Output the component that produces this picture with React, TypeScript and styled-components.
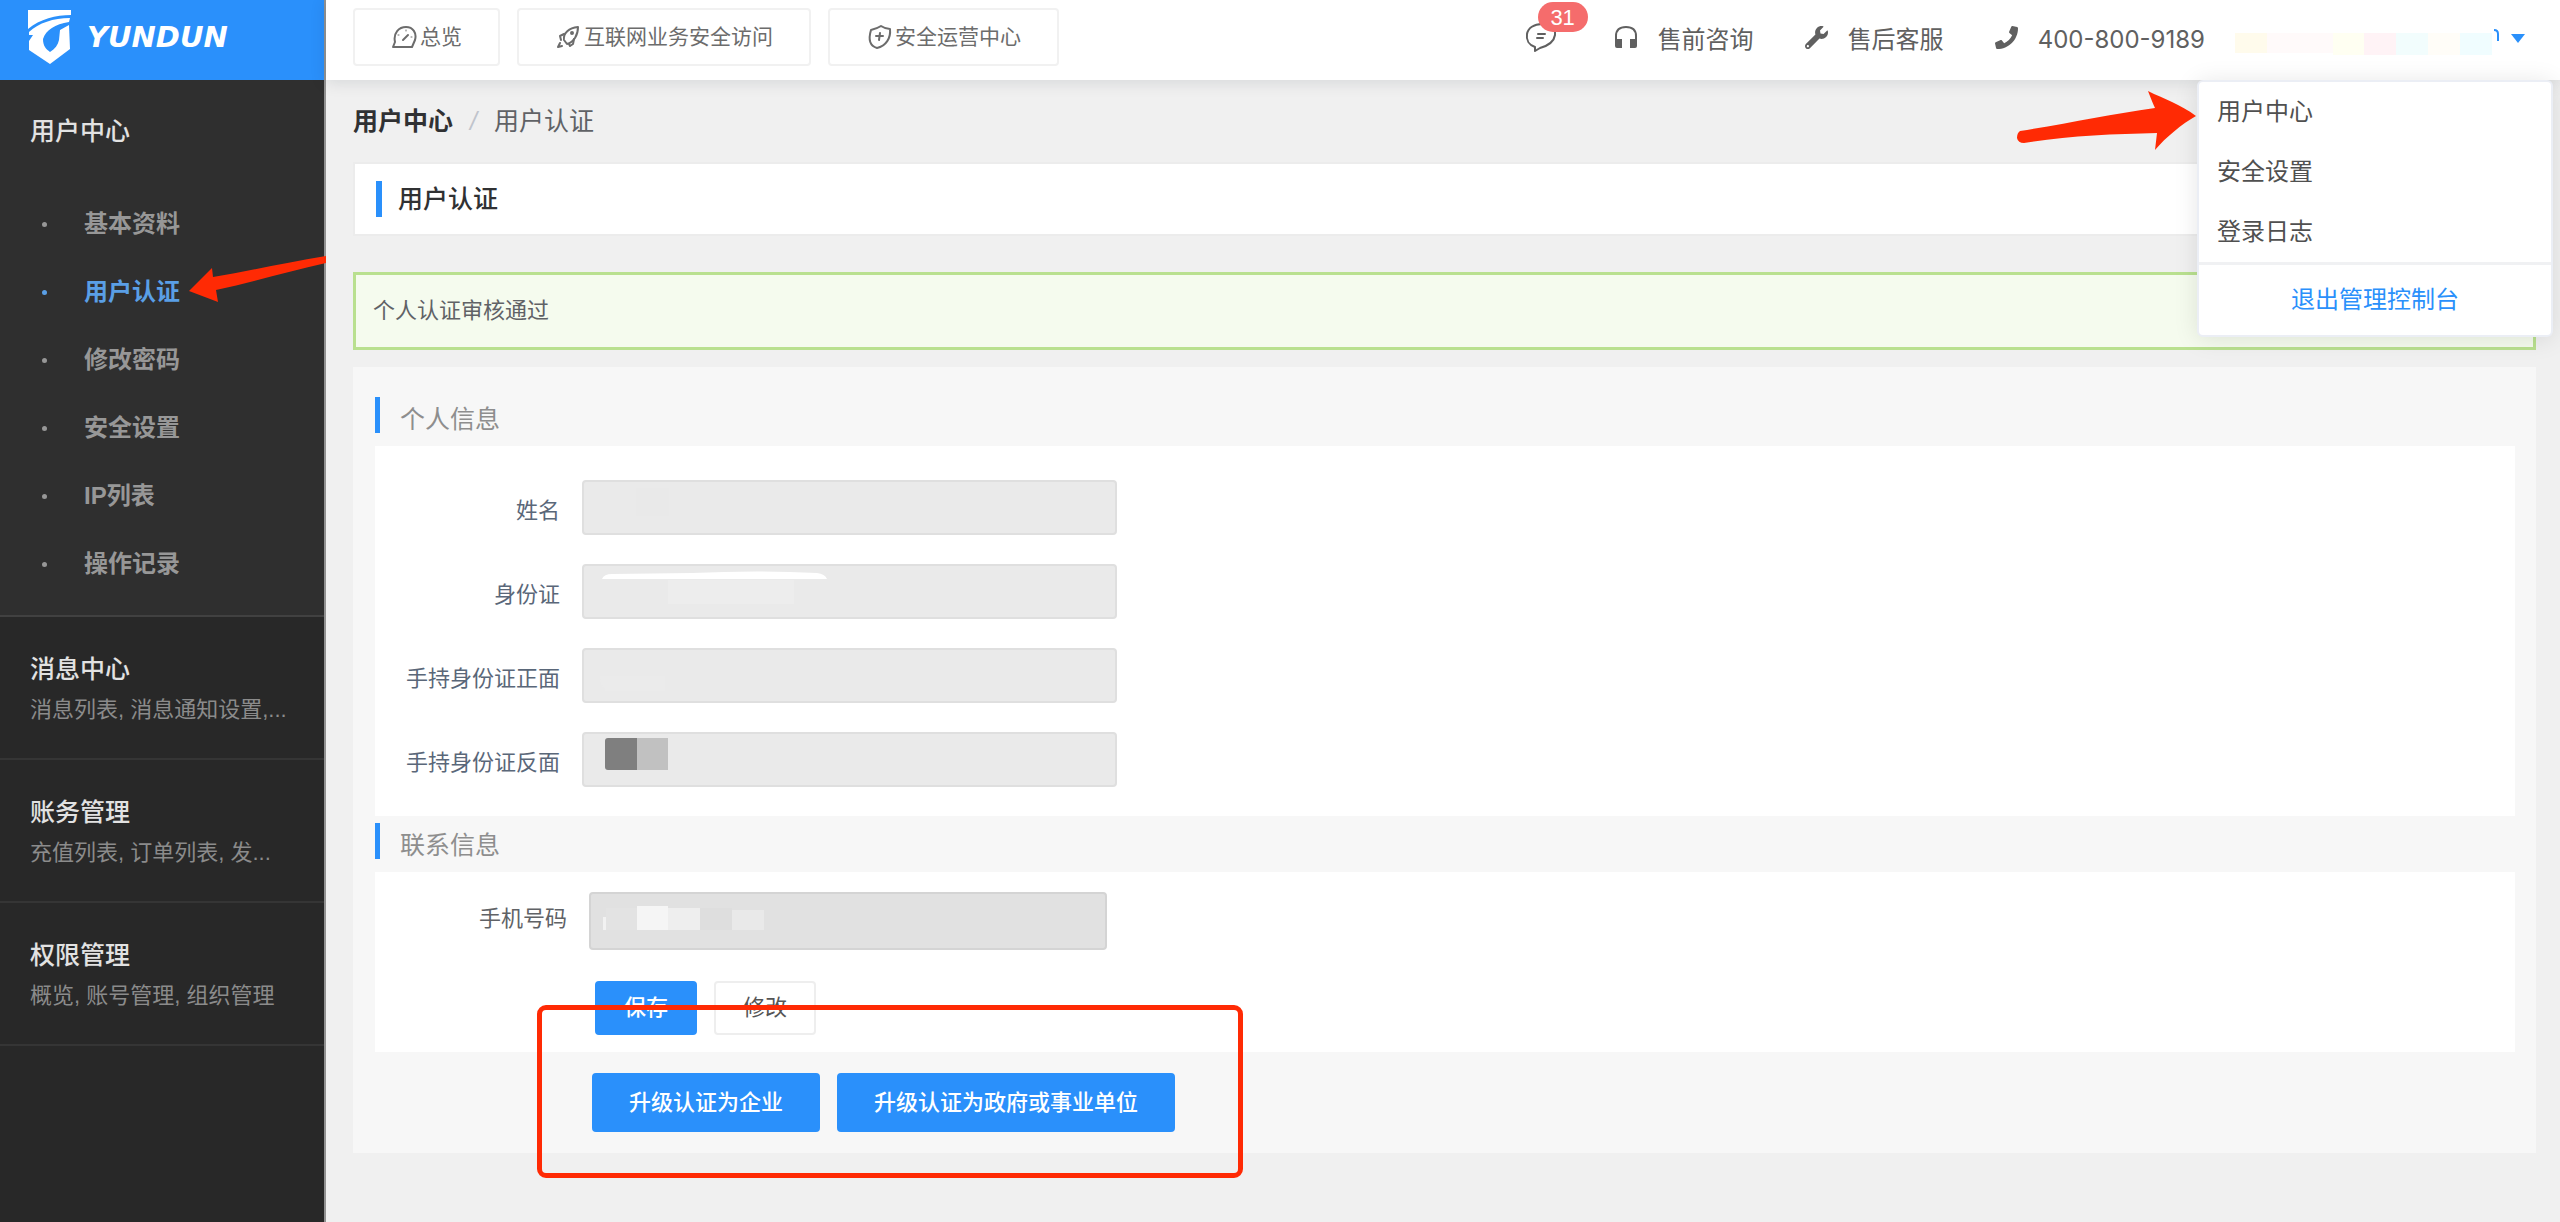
import React from 'react';
import styled, { createGlobalStyle } from 'styled-components';
import { FaPhone, FaWrench } from 'react-icons/fa';

const color = {
  blue: '#2a90fb',
  red: '#ff2a04',
  page: '#f0f0f0',
  panel: '#f7f7f7',
  text: '#303133',
  muted: '#606266',
  line: '#ececec',
};

const GlobalStyle = createGlobalStyle`
  *, *::before, *::after { box-sizing: border-box; }
  body {
    margin: 0;
    background: ${color.page};
    color: ${color.text};
    font-family: "Liberation Sans", "Noto Sans CJK SC", sans-serif;
    font-size: 22px;
    line-height: 34px;
  }
  button, input { font: inherit; color: inherit; }
  a { color: inherit; text-decoration: none; }
  ul { list-style: none; margin: 0; padding: 0; }
  h1, h2, p { margin: 0; }
`;

const Shell = styled.div`
  display: grid;
  grid-template-columns: 326px minmax(0, 1fr);
  min-height: 100vh;
`;

/* Sidebar */

const Sidebar = styled.aside`
  display: flex;
  flex-direction: column;
  background: #282828;
  border-right: 2px solid #929292;
`;

const Brand = styled.a`
  display: flex;
  align-items: center;
  gap: 16px;
  height: 80px;
  padding: 0 28px 6px;
  background: ${color.blue};
  color: #fff;
`;

const BrandName = styled.span`
  font-family: "DejaVu Sans", sans-serif;
  font-size: 29px;
  font-style: italic;
  font-weight: 700;
`;

const CurrentGroup = styled.section`
  padding: 34px 0 17px;
  background: #2f2f2f;
  border-bottom: 2px solid #414141;
`;

const GroupTitle = styled.h2`
  color: #e2e2e2;
  font-size: 25px;
  font-weight: 500;
  line-height: 34px;
`;

const CurrentTitle = styled(GroupTitle)`
  padding: 0 30px;
  margin-bottom: 42px;
`;

const MenuItem = styled.li`
  position: relative;
`;

const MenuLink = styled.a<{ $active?: boolean }>`
  display: flex;
  align-items: center;
  gap: 37px;
  height: 68px;
  padding-left: 42px;
  color: ${(p) => (p.$active ? '#5a9fe6' : '#979797')};
  font-size: 24px;
  font-weight: 700;

  &::before {
    content: "";
    width: 5px;
    height: 5px;
    border-radius: 50%;
    background: currentColor;
  }
`;

const MenuArrow = styled.svg`
  position: absolute;
  top: -5px;
  right: -2px;
  width: 137px;
  height: 50px;
  fill: ${color.red};
`;

const Group = styled.a`
  display: flex;
  flex-direction: column;
  gap: 7px;
  padding: 35px 30px 31px;
  border-bottom: 2px solid #353535;
`;

const GroupSummary = styled.p`
  color: #8b8b8b;
  white-space: nowrap;
`;

/* Header */

const Main = styled.div`
  min-width: 0;
`;

const Header = styled.header`
  position: relative;
  z-index: 2;
  display: flex;
  justify-content: space-between;
  height: 80px;
  padding: 0 35px 0 27px;
  background: #fff;
  box-shadow: 0 2px 16px rgba(0, 21, 41, 0.12);
`;

const Tabs = styled.nav`
  display: flex;
  gap: 17px;
  padding: 8px 0 14px;
`;

const Tab = styled.button`
  display: flex;
  align-items: center;
  gap: 3px;
  padding: 0 36px;
  border: 2px solid #f1f1f1;
  border-radius: 4px;
  background: #fff;
  color: #6c6c6c;
  font-size: 21px;
  white-space: nowrap;
`;

const LineIcon = styled.svg`
  flex: none;
  width: 26px;
  height: 26px;
  fill: none;
  stroke: currentColor;
  stroke-width: 2;
  stroke-linejoin: round;
  stroke-linecap: round;
`;

const Tools = styled.div`
  display: flex;
  align-items: center;
  gap: 51px;
  color: #606060;
  font-size: 24px;
`;

const MessageButton = styled.button`
  position: relative;
  display: flex;
  width: 34px;
  padding: 0 0 4px;
  margin-right: 4px;
  border: 0;
  background: none;
`;

const MessageIcon = styled(LineIcon)`
  width: 32px;
  height: 32px;
`;

const Badge = styled.span`
  position: absolute;
  left: 13px;
  bottom: 26px;
  width: 50px;
  height: 30px;
  border-radius: 15px;
  background: #f56c6c;
  color: #fff;
  font-size: 22px;
  line-height: 32px;
  text-align: center;
`;

const Contact = styled.a`
  display: flex;
  align-items: center;
  gap: 20px;
  white-space: nowrap;

  svg { flex: none; margin-bottom: 6px; }
`;

const Phone = styled.span`
  font-family: Inter, sans-serif;
`;

const Account = styled.div`
  position: relative;
  display: flex;
  align-self: stretch;
  margin-left: -21px;
`;

const AccountButton = styled.button`
  display: flex;
  align-items: center;
  gap: 9px;
  padding: 0;
  border: 0;
  background: none;
  color: ${color.blue};
`;

const Caret = styled.span`
  border: 7px solid transparent;
  border-top: 9px solid currentColor;
  border-bottom: 0;
  margin-bottom: 4px;
`;

const Dropdown = styled.div`
  position: absolute;
  top: 80px;
  right: -28px;
  width: 356px;
  border: 2px solid #ebeef5;
  border-radius: 6px;
  background: #fff;
  box-shadow: 0 2px 24px rgba(0, 0, 0, 0.1);
  color: #505050;
`;

const DropdownLink = styled.a`
  display: block;
  padding: 0 18px;
  line-height: 60px;
`;

const Logout = styled.button`
  display: block;
  width: 100%;
  height: 73px;
  padding: 0;
  border: 0;
  border-top: 3px solid #f0f1f3;
  background: none;
  color: ${color.blue};
`;

const DropdownArrow = styled.svg`
  position: absolute;
  top: 9px;
  right: 353px;
  width: 182px;
  height: 62px;
  fill: ${color.red};
`;

/* Content */

const Content = styled.main`
  padding: 0 24px 40px 27px;
`;

const Breadcrumb = styled.nav`
  display: flex;
  align-items: center;
  gap: 17px;
  height: 82px;
  color: ${color.muted};
  font-size: 25px;

  a { color: ${color.text}; font-weight: 700; }
  i { color: #c0c4cc; }
`;

const TitleCard = styled.div`
  display: flex;
  align-items: center;
  gap: 16px;
  height: 74px;
  margin-bottom: 36px;
  padding: 0 21px;
  border: 2px solid ${color.line};
  background: #fff;

  &::before {
    content: "";
    width: 6px;
    height: 36px;
    background: ${color.blue};
  }
`;

const PageTitle = styled.h1`
  font-size: 25px;
  font-weight: 500;
`;

const Notice = styled.div`
  margin-bottom: 17px;
  padding: 19px 17px;
  border: 3px solid #b9e08f;
  background: #f5fbee;
  color: ${color.muted};
  line-height: 34px;
`;

const Panel = styled.div`
  position: relative;
  padding: 23px 21px 21px 22px;
  background: ${color.panel};
`;

const SectionTitle = styled.h2`
  display: flex;
  gap: 20px;
  padding: 7px 0 13px;
  color: #8e8e8e;
  font-size: 25px;
  font-weight: 400;
  line-height: 44px;
  height: 56px;

  &::before {
    content: "";
    width: 5px;
    height: 36px;
    background: ${color.blue};
  }
`;

const IdentityCard = styled.div`
  display: flex;
  flex-direction: column;
  gap: 29px;
  padding: 34px 0 29px;
  background: #fff;
`;

const ContactCard = styled(IdentityCard)`
  gap: 31px;
  padding: 20px 0 17px;
`;

const Field = styled.div<{ $wide?: boolean }>`
  display: grid;
  grid-template-columns: ${(p) => (p.$wide ? '192px 518px' : '185px 535px')};
  column-gap: 22px;
  align-items: center;
  color: ${(p) => (p.$wide ? color.muted : '#5a6779')};

  label {
    padding: ${(p) => (p.$wide ? '0 0 4px' : '6px 0 0')};
    text-align: right;
  }
`;

const InputWrap = styled.div`
  position: relative;
  display: flex;
`;

const Input = styled.input<{ $tall?: boolean }>`
  width: 100%;
  height: ${(p) => (p.$tall ? '58px' : '55px')};
  padding: 0 20px;
  border: 2px solid ${(p) => (p.$tall ? '#d4d4d4' : '#dfdfdf')};
  border-radius: 4px;
  background: ${(p) => (p.$tall ? '#e1e1e1' : '#eaeaea')};
`;

const Mask = styled.svg`
  position: absolute;
  inset: 0;
  width: 100%;
  height: 100%;
  pointer-events: none;
`;

const Actions = styled.div`
  display: flex;
  gap: 17px;
  padding-left: 220px;
`;

const UpgradeActions = styled(Actions)`
  padding: 21px 0 0 217px;
`;

const Button = styled.button<{ $primary?: boolean; $large?: boolean }>`
  height: ${(p) => (p.$large ? '59px' : '54px')};
  padding: 0 ${(p) => (p.$large ? '35px' : '27px')};
  border: 2px solid ${(p) => (p.$primary ? color.blue : '#eeeeee')};
  border-radius: 4px;
  background: ${(p) => (p.$primary ? color.blue : '#fff')};
  color: ${(p) => (p.$primary ? '#fff' : '#555')};
  font-weight: ${(p) => (p.$primary ? 500 : 400)};
`;

const Highlight = styled.div`
  position: absolute;
  left: 184px;
  top: 638px;
  width: 706px;
  height: 173px;
  border: 5px solid ${color.red};
  border-radius: 9px;
  pointer-events: none;
`;

const menu = ['基本资料', '用户认证', '修改密码', '安全设置', 'IP列表', '操作记录'];

const groups = [
  { title: '消息中心', summary: '消息列表, 消息通知设置,...' },
  { title: '账务管理', summary: '充值列表, 订单列表, 发...' },
  { title: '权限管理', summary: '概览, 账号管理, 组织管理' },
];

const DashboardIcon = () => (
  <LineIcon viewBox="0 0 26 26">
    <path d="M2 23 L4 18 C2 9 8 3 15 3 C22 3 26 9 24 16 L21 23 Z" />
    <path d="M12 16 L17 11" />
    <path d="M15 6v1M7 11h1M20 13h1" strokeWidth="1" />
  </LineIcon>
);

const RocketIcon = () => (
  <LineIcon viewBox="0 0 26 26">
    <path d="M9 16 C8 9 14 4 23 3 C23 11 19 18 12 20 Z" />
    <path d="M9 10 L5 12 L6 16 M14 20 L15 22 L18 20 L19 15" />
    <path d="M5 19 L3 23 L7 22" />
    <circle cx="17" cy="9" r="1" />
  </LineIcon>
);

const ShieldIcon = () => (
  <LineIcon viewBox="0 0 26 26">
    <path d="M15 2 C18 4 21 5 24 5 C25 14 20 22 11 24 C4 22 2 16 5 6 C9 5 12 4 15 2 Z" />
    <path d="M14 9 L13 16M10 12 H17" />
  </LineIcon>
);

const HeadsetIcon = () => (
  <svg width="24" height="24" viewBox="0 0 24 24" aria-hidden="true">
    <path d="M2 17 V11 C2 5 6 2 12 2 C18 2 22 5 22 11 V17" fill="none" stroke="currentColor" strokeWidth="2" />
    <path d="M1 14 H8 V23 H3 Q1 23 1 21 Z M23 14 H16 V23 H21 Q23 23 23 21 Z" fill="currentColor" />
  </svg>
);

export default function App() {
  return (
    <>
      <GlobalStyle />
      <Shell>
        <Sidebar>
          <Brand href="#">
            <svg width="43" height="54" viewBox="0 0 43 54" fill="#fff" aria-hidden="true">
              <path d="M0 0 H43 V5 C28 5 12 9 0 19 Z" />
              <path d="M1 22 C11 13 25 8 42 8 L41 12 C27 14 18 20 15 29 C15 36 18 39 22 42 C27 39 30 35 31 30 L32 20 L41 15 L42 39 L22 54 L1 40 L1 31 L5 25 L1 25 Z" />
            </svg>
            <BrandName>YUNDUN</BrandName>
          </Brand>
          <CurrentGroup>
            <CurrentTitle>用户中心</CurrentTitle>
            <ul>
              {menu.map((name) => {
                const active = name === '用户认证';
                return (
                  <MenuItem key={name}>
                    <MenuLink href="#" $active={active}>{name}</MenuLink>
                    {active && (
                      <MenuArrow viewBox="0 0 137 50" aria-hidden="true">
                        <path d="M0 38 L23 15 L24 24 C60 18 95 10 137 3 V10 C100 18 65 29 27 37 L29 49 Z" />
                      </MenuArrow>
                    )}
                  </MenuItem>
                );
              })}
            </ul>
          </CurrentGroup>
          {groups.map((g) => (
            <Group href="#" key={g.title}>
              <GroupTitle>{g.title}</GroupTitle>
              <GroupSummary>{g.summary}</GroupSummary>
            </Group>
          ))}
        </Sidebar>

        <Main>
          <Header>
            <Tabs>
              <Tab type="button"><DashboardIcon />总览</Tab>
              <Tab type="button"><RocketIcon />互联网业务安全访问</Tab>
              <Tab type="button"><ShieldIcon />安全运营中心</Tab>
            </Tabs>
            <Tools>
              <MessageButton type="button" aria-label="消息">
                <MessageIcon viewBox="0 0 32 32">
                  <path d="M10 25 C4 23 1 18 2 12 C3 6 9 2 17 2 C25 2 31 6 30 13 C29 20 22 24 15 26 L10 29 Z" />
                  <path d="M13 12 H20M12 16 H18" />
                </MessageIcon>
                <Badge>31</Badge>
              </MessageButton>
              <Contact href="#"><HeadsetIcon />售前咨询</Contact>
              <Contact href="#"><FaWrench size={23} />售后客服</Contact>
              <Contact href="tel:400-800-9189"><FaPhone size={23} /><Phone>400-800-9189</Phone></Contact>
              <Account>
                <AccountButton type="button" aria-label="账号">
                  <svg width="267" height="30" viewBox="0 0 267 30" aria-hidden="true">
                    <rect x="0" y="8" width="32" height="20" fill="#fffbec" />
                    <rect x="32" y="8" width="66" height="20" fill="#fffafa" />
                    <rect x="98" y="8" width="31" height="22" fill="#fffff2" />
                    <rect x="129" y="8" width="32" height="22" fill="#fff3f6" />
                    <rect x="161" y="8" width="32" height="22" fill="#f2fdfd" />
                    <rect x="193" y="8" width="32" height="22" fill="#fffdf8" />
                    <rect x="225" y="8" width="32" height="22" fill="#f0fdff" />
                    <path d="M259 5 Q263 5 263 9 V16" fill="none" stroke="#2a90fb" strokeWidth="2" />
                  </svg>
                  <Caret />
                </AccountButton>
                <Dropdown>
                  <DropdownLink href="#">用户中心</DropdownLink>
                  <DropdownLink href="#">安全设置</DropdownLink>
                  <DropdownLink href="#">登录日志</DropdownLink>
                  <Logout type="button">退出管理控制台</Logout>
                  <DropdownArrow viewBox="0 0 182 62" aria-hidden="true">
                    <path d="M4 49 C50 42 95 32 139 26 Q137 22 132 9 C148 17 164 22 180 34 C166 42 150 55 139 68 L141 51 C96 52 50 54 8 61 Q2 61 1 56 Q1 51 4 49 Z" transform="translate(0 -9)" />
                  </DropdownArrow>
                </Dropdown>
              </Account>
            </Tools>
          </Header>

          <Content>
            <Breadcrumb>
              <a href="#">用户中心</a>
              <i>/</i>
              <span>用户认证</span>
            </Breadcrumb>
            <TitleCard><PageTitle>用户认证</PageTitle></TitleCard>
            <Notice role="status">个人认证审核通过</Notice>

            <Panel>
              <SectionTitle>个人信息</SectionTitle>
              <IdentityCard>
                <Field>
                  <label htmlFor="name">姓名</label>
                  <InputWrap>
                    <Input id="name" readOnly />
                    <Mask><rect x="54" y="8" width="33" height="28" fill="#e9e9e9" /></Mask>
                  </InputWrap>
                </Field>
                <Field>
                  <label htmlFor="idcard">身份证</label>
                  <InputWrap>
                    <Input id="idcard" readOnly />
                    <Mask>
                      <rect x="86" y="16" width="126" height="24" fill="#ededed" />
                      <path d="M20 15 Q22 10 30 10 L110 9 Q175 6 235 9 Q243 10 245 15 Z" fill="#fff" />
                    </Mask>
                  </InputWrap>
                </Field>
                <Field>
                  <label htmlFor="front">手持身份证正面</label>
                  <InputWrap>
                    <Input id="front" readOnly />
                    <Mask><path d="M18 28 H83 V43 H24 Q18 38 18 28 Z" fill="#ebebeb" /></Mask>
                  </InputWrap>
                </Field>
                <Field>
                  <label htmlFor="back">手持身份证反面</label>
                  <InputWrap>
                    <Input id="back" readOnly />
                    <Mask>
                      <rect x="23" y="6" width="36" height="32" rx="3" fill="#7f7f7f" />
                      <rect x="55" y="6" width="31" height="32" fill="#c1c1c1" />
                    </Mask>
                  </InputWrap>
                </Field>
              </IdentityCard>

              <SectionTitle>联系信息</SectionTitle>
              <ContactCard>
                <Field $wide>
                  <label htmlFor="mobile">手机号码</label>
                  <InputWrap>
                    <Input id="mobile" $tall readOnly />
                    <Mask>
                      <path d="M14 25 H17 V38 H14 Z" fill="#f2f2f2" />
                      <rect x="17" y="16" width="31" height="22" fill="#e3e3e3" />
                      <rect x="48" y="14" width="31" height="24" fill="#f5f5f5" />
                      <rect x="79" y="16" width="32" height="22" fill="#eeeeee" />
                      <rect x="111" y="16" width="32" height="22" fill="#dedede" />
                      <rect x="143" y="18" width="32" height="20" fill="#e9e9e9" />
                    </Mask>
                  </InputWrap>
                </Field>
                <Actions>
                  <Button type="button" $primary>保存</Button>
                  <Button type="button">修改</Button>
                </Actions>
              </ContactCard>

              <UpgradeActions>
                <Button type="button" $primary $large>升级认证为企业</Button>
                <Button type="button" $primary $large>升级认证为政府或事业单位</Button>
              </UpgradeActions>
              <Highlight />
            </Panel>
          </Content>
        </Main>
      </Shell>
    </>
  );
}
